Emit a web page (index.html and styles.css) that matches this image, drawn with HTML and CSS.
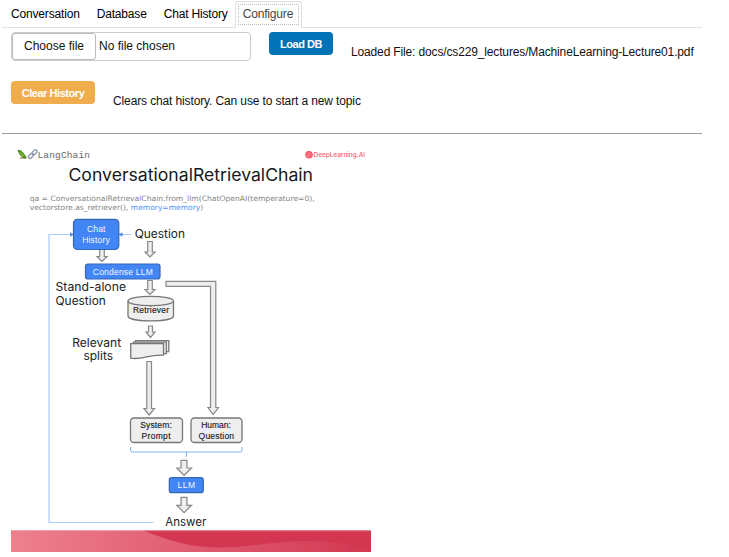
FILE: index.html
```html
<!DOCTYPE html>
<html lang="en">
<head>
<meta charset="utf-8">
<title>Configure</title>
<link rel="stylesheet" href="styles.css">
</head>
<body>
<main class="app">
  <nav class="tabs">
    <a class="tab">Conversation</a>
    <a class="tab">Database</a>
    <a class="tab">Chat History</a>
    <a class="tab active"><span class="focus">Configure</span></a>
  </nav>
  <section class="row load">
    <div class="file"><span class="choose">Choose file</span><span class="filename">No file chosen</span></div>
    <button class="btn primary">Load DB</button>
    <p class="note loaded">Loaded File: docs/cs229_lectures/MachineLearning-Lecture01.pdf</p>
  </section>
  <section class="row clear">
    <button class="btn warning">Clear History</button>
    <p class="note">Clears chat history. Can use to start a new topic</p>
  </section>
  <hr class="rule">
  <svg class="diagram" viewBox="11 148 360 404" width="360" height="404">
    <defs>
      <linearGradient id="band" x1="0" x2="1" y1="0" y2="0">
        <stop offset="0" stop-color="#ee808e"/><stop offset="1" stop-color="#d23852"/>
      </linearGradient>
    </defs>

    <!-- logos -->
    <path d="M17.500 150.500l3-.6 2.800 2.600 3.700 5.500-1.500.8-3-1.200-2.800-2.800z" fill="#4e9b28"/>
    <path d="M20.500 152.500l3 3.500" stroke="#d5b43b" stroke-width="1"/>
    <path d="M17.500 150.500l1.500-.3.500 1.600z" fill="#343"/>
    <path d="M20 158h5" stroke="#805b2b" stroke-width="1"/>
    <g fill="none" stroke="#8a98a5" stroke-width="1.300">
      <rect x="28" y="154.300" width="6" height="3.200" rx="1.600" transform="rotate(-45 31 156)"/>
      <rect x="31.500" y="150.700" width="6" height="3.200" rx="1.600" transform="rotate(-45 34.500 152.300)"/>
    </g>
    <text class="mono" x="37.500" y="158" textLength="52.500">LangChain</text>
    <circle cx="309" cy="154.700" r="3.200" fill="#fc8292" stroke="#f94e67" stroke-width="1.200"/>
    <path d="M307.300 154.500a1.800 1.800 0 1 1 1.700 1.900M308.700 154.300l1 .8" fill="none" stroke="#f63e5b" stroke-width=".7"/>
    <text class="brand" x="313.500" y="157" textLength="51.500">DeepLearning.AI</text>

    <text class="title" x="68.500" y="181.300" textLength="244.500" lengthAdjust="spacingAndGlyphs">ConversationalRetrievalChain</text>
    <text class="code" x="29.700" y="200.800" textLength="285" lengthAdjust="spacingAndGlyphs">qa = ConversationalRetrievalChain.from_llm(ChatOpenAI(temperature=0),</text>
    <text class="code" x="29.700" y="210" textLength="173.500" lengthAdjust="spacingAndGlyphs">vectorstore.as_retriever(), <tspan class="memory">memory=memory</tspan>)</text>

    <!-- feedback links -->
    <path class="link" d="M153.500 522.500H49V234.500H71M131 234.500H121"/>
    <path class="tip" d="M70 232.300l4 2.200-4 2.200zM122.500 232.300l-4 2.200 4 2.200z"/>

    <!-- hollow arrows -->
    <g class="arrow">
      <path d="M99.700 249.500h4.600v7h2.700l-5 5-5-5h2.700z"/>
      <path d="M147.700 241.500h4.600v10.500h2.700l-5 5-5-5h2.700z"/>
      <path d="M147.700 280.500h4.600v9h2.700l-5 5-5-5h2.700z"/>
      <path d="M148.500 326h4v6h2.500l-4.500 5.500-4.500-5.500h2.500z"/>
      <path d="M146.800 361.500h4.700v47h3l-5.300 6.500-5.300-6.500h2.900z"/>
      <path d="M166 281.300h49.800v126.200h2.700l-5.300 7-5.300-7h2.600V286.300H166z"/>
      <path d="M181 460.300h6v7.700h4.500l-7.400 7.300-7.300-7.300h4.200z"/>
      <path d="M181 497.300h6v8h4.500l-7.400 7.300-7.300-7.300h4.200z"/>
    </g>

    <!-- blue steps -->
    <g class="step">
      <rect x="73.500" y="219.300" width="45.300" height="30.200" rx="4"/>
      <rect x="85.500" y="264" width="74.500" height="15" rx="2.500"/>
      <rect x="169.300" y="477.700" width="34" height="15" rx="2.500"/>
    </g>
    <g class="steptext">
      <text x="96.200" y="232" textLength="18.500">Chat</text>
      <text x="96" y="243" textLength="27.500">History</text>
      <text x="122.800" y="274.700" textLength="60">Condense LLM</text>
      <text x="186.300" y="488.300" textLength="17.500">LLM</text>
    </g>

    <!-- retriever, splits and prompts -->
    <g class="node">
      <path d="M128 301v15c0 6.500 45.500 6.500 45.500 0v-15"/>
      <ellipse cx="150.750" cy="301" rx="22.750" ry="4.700"/>
      <path d="M135.500 340.700h33.300v11h-33.300z"/>
      <path d="M133.300 342.200h33v11.500h-33z"/>
      <path d="M130.700 343.700h32.800v11.500c-15-1-20 5-32.800 3z"/>
      <rect x="130.500" y="418" width="52" height="24.500" rx="3.500"/>
      <rect x="191" y="418" width="51" height="24.500" rx="3.500"/>
    </g>
    <g class="nodetext">
      <text x="151" y="313.300" textLength="36">Retriever</text>
      <text x="156" y="427.700" textLength="31.500">System:</text>
      <text x="156" y="438.700" textLength="29">Prompt</text>
      <text x="216" y="427.700" textLength="29.500">Human:</text>
      <text x="216.300" y="438.700" textLength="35.500">Question</text>
    </g>
    <path class="brace" d="M130.500 447v3q0 2 2 2H240q2 0 2-2v-3M186.500 452v5"/>

    <!-- captions -->
    <g class="caption">
      <text x="134.700" y="237.700" textLength="50.300" lengthAdjust="spacingAndGlyphs">Question</text>
      <text x="55.500" y="291.300" textLength="70.500" lengthAdjust="spacingAndGlyphs">Stand-alone</text>
      <text x="55.500" y="304.800" textLength="50.300" lengthAdjust="spacingAndGlyphs">Question</text>
      <text x="72.200" y="346.800" textLength="49" lengthAdjust="spacingAndGlyphs">Relevant</text>
      <text x="83.500" y="360" textLength="29.500" lengthAdjust="spacingAndGlyphs">splits</text>
      <text x="165.300" y="526" textLength="41" lengthAdjust="spacingAndGlyphs">Answer</text>
    </g>

    <!-- footer band -->
    <rect x="11" y="530.500" width="360" height="21.500" fill="url(#band)"/>
    <path d="M143 530.500C173 542 192 547.500 220 547.500S275 541 306 541C338 541 355 545 371 552V530.500z" fill="#d23650"/>
    <path d="M11 530.800H371" stroke="#e98998" stroke-width=".8"/>
  </svg>
</main>
</body>
</html>
```
FILE: styles.css
```css
body {
  margin: 0;
  background: #fff;
  color: #212529;
  font: 12px/18px "Liberation Sans", Arial, sans-serif;
}
.app { width: 700px; padding: 1px 0 0 2px; }
.tabs {
  display: flex;
  height: 26px;
  border-bottom: 1px solid #e1e1e1;
}
.tab {
  box-sizing: border-box;
  height: 26px;
  padding: 4px 8px 0 9px;
  color: #000;
  letter-spacing: -.17px;
  white-space: nowrap;
}
.tab.active {
  height: 27px;
  width: 67px;
  margin-left: -1px;
  padding: 2px;
  border: 1px solid #e1e1e1;
  border-bottom: 0;
  border-radius: 3px 3px 0 0;
  background: #fff;
  color: #444;
}
.focus {
  display: block;
  box-sizing: border-box;
  height: 21px;
  border: 1px dotted #bbb;
  padding: 0 0 0 4px;
}
.row { display: flex; align-items: flex-start; padding-left: 9px; }
.load { height: 49px; padding-top: 4px; }
.clear { height: 52px; }
.file {
  box-sizing: border-box;
  display: flex;
  width: 240px;
  height: 29px;
  margin-right: 18px;
  border: 1px solid #ccc;
  border-radius: 4px;
  color: #111;
}
.choose {
  box-sizing: border-box;
  width: 84px;
  height: 27px;
  padding: 3px 0 0 11px;
  border: 1px solid #bbb;
  border-radius: 3px;
}
.filename { padding: 4px 0 0 3px; }
.btn {
  height: 23px;
  padding: 0;
  border: 0;
  border-radius: 4px;
  color: #fff;
  font: bold 11px/22px "Liberation Sans", Arial, sans-serif;
  letter-spacing: -.45px;
}
.primary { width: 64px; background: #0072b5; }
.warning { width: 84px; background: #f0ad4e; line-height: 24px; }
.note {
  margin: 11px 0 0 18px;
  color: #111;
  letter-spacing: -.125px;
  white-space: nowrap;
}
.loaded { letter-spacing: -.145px; }
.rule { height: 1px; margin: 0 0 14px; border: 0; background: #999; }
.diagram { display: block; margin-left: 9px; }
.mono { font: 9.500px "Liberation Mono", monospace; fill: #666; }
.brand { font: 500 6.500px Inter, sans-serif; fill: #fa5970; }
.title { font: 17px Inter, sans-serif; fill: #171717; }
.code { font: 7.400px "DejaVu Sans", sans-serif; fill: #858585; }
.memory { fill: #4c91fa; }
.caption { font: 11.500px Inter, sans-serif; fill: #222; }
.link, .brace { fill: none; stroke: #a9cbfa; stroke-width: 1.200; }
.brace { stroke: #82b3f6; stroke-width: 1; }
.tip { fill: #4b8cec; }
.arrow { fill: #eee; stroke: #888; stroke-width: 1.200; }
.step { fill: #4285f4; stroke: #3567b5; stroke-width: 1.200; }
.steptext { font: 8.500px "Liberation Sans", sans-serif; fill: #f4f8ff; text-anchor: middle; }
.node { fill: #eee; stroke: #777; stroke-width: 1.300; }
.nodetext { font: 8.500px "Liberation Sans", sans-serif; fill: #222; stroke: #222; stroke-width: .15; text-anchor: middle; }
```
